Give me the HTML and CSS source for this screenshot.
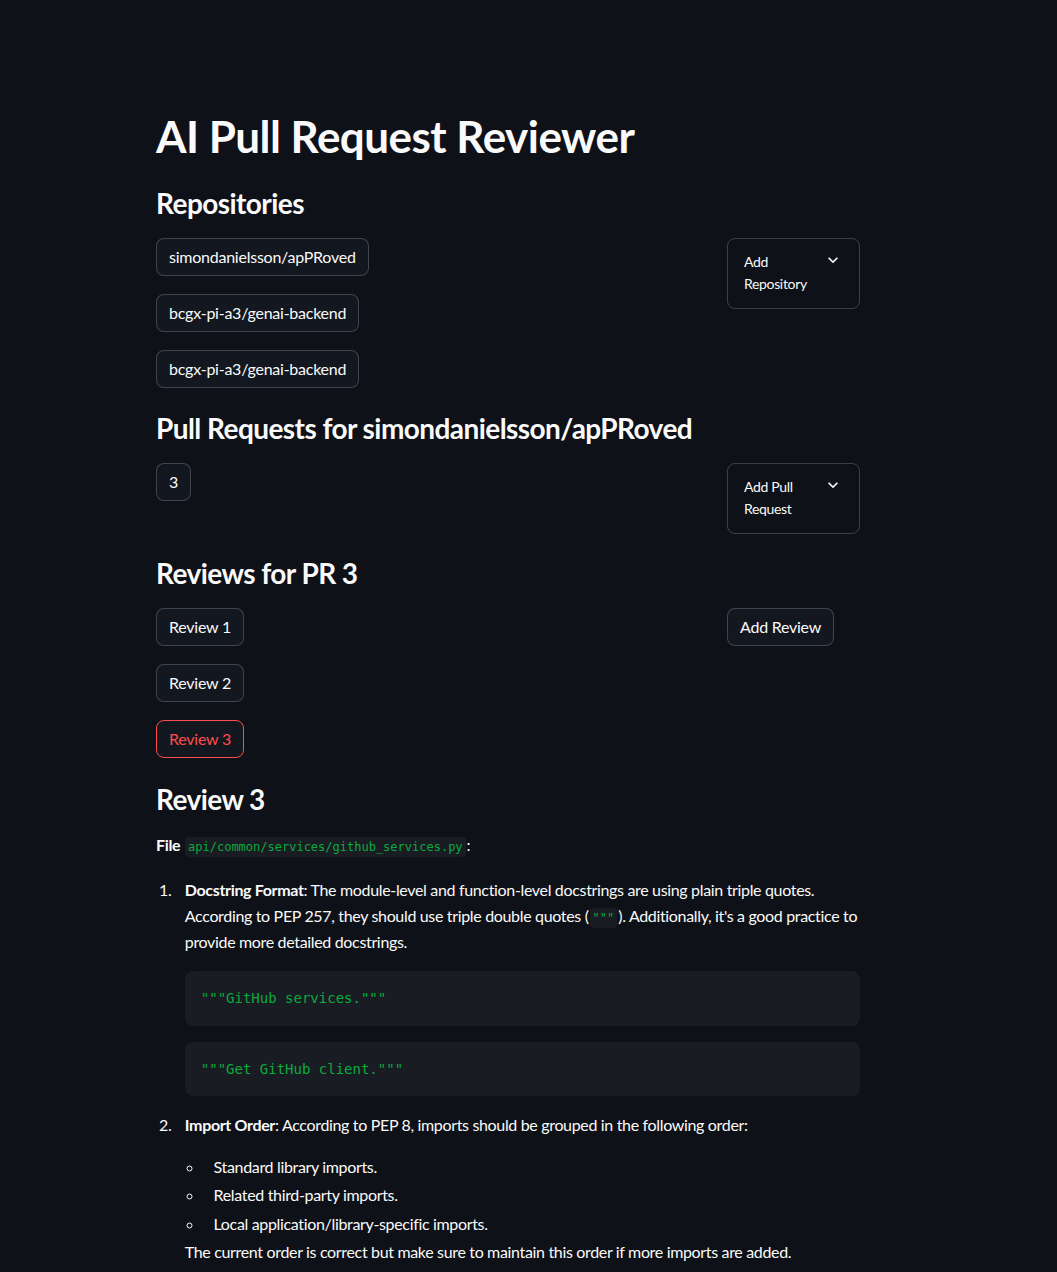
FILE: index.html
```html
<!DOCTYPE html>
<html lang="en">
<head>
<meta charset="utf-8">
<title>AI Pull Request Reviewer</title>
<link rel="stylesheet" href="styles.css">
</head>
<body>
<main class="main">
  <h1 class="title">AI Pull Request Reviewer</h1>

  <h3 class="heading">Repositories</h3>
  <div class="cols">
    <div class="stack">
      <button class="btn">simondanielsson/apPRoved</button>
      <button class="btn">bcgx-pi-a3/genai-backend</button>
      <button class="btn">bcgx-pi-a3/genai-backend</button>
    </div>
    <div class="side">
      <div class="expander">
        <span class="exp-label">Add Repository</span>
        <svg class="chev" viewBox="0 0 24 24" width="20" height="20"><path d="M16.59 8.59L12 13.17 7.41 8.59 6 10l6 6 6-6z" fill="#fafafa"/></svg>
      </div>
    </div>
  </div>

  <h3 class="heading">Pull Requests for simondanielsson/apPRoved</h3>
  <div class="cols">
    <div class="stack">
      <button class="btn">3</button>
    </div>
    <div class="side">
      <div class="expander">
        <span class="exp-label">Add Pull Request</span>
        <svg class="chev" viewBox="0 0 24 24" width="20" height="20"><path d="M16.59 8.59L12 13.17 7.41 8.59 6 10l6 6 6-6z" fill="#fafafa"/></svg>
      </div>
    </div>
  </div>

  <h3 class="heading heading-tight">Reviews for PR 3</h3>
  <div class="cols">
    <div class="stack">
      <button class="btn">Review 1</button>
      <button class="btn">Review 2</button>
      <button class="btn btn-active">Review 3</button>
    </div>
    <div class="side">
      <button class="btn">Add Review</button>
    </div>
  </div>

  <h3 class="heading heading-loose">Review 3</h3>
  <div class="md">
    <p class="file"><strong>File</strong> <code>api/common/services/github_services.py</code>:</p>
    <ol class="olist">
      <li class="item">
        <p><strong>Docstring Format</strong>: The module-level and function-level docstrings are using plain triple quotes. According to PEP 257, they should use triple double quotes (<code>"""</code>). Additionally, it's a good practice to provide more detailed docstrings.</p>
        <pre class="codeblock"><code>"""GitHub services."""</code></pre>
        <pre class="codeblock"><code>"""Get GitHub client."""</code></pre>
      </li>
      <li class="item">
        <p><strong>Import Order</strong>: According to PEP 8, imports should be grouped in the following order:</p>
        <ul class="ulist">
          <li>Standard library imports.</li>
          <li>Related third-party imports.</li>
          <li>Local application/library-specific imports.</li>
        </ul>
        <p>The current order is correct but make sure to maintain this order if more imports are added.</p>
      </li>
    </ol>
  </div>
</main>
</body>
</html>
```

FILE: styles.css
```css
html, body {
  margin: 0;
  padding: 0;
  background: #0e1117;
}

body {
  color: #fafafa;
  font-family: Lato, "Source Sans Pro", "Noto Sans", sans-serif;
  font-size: 16px;
  line-height: 1.6;
  letter-spacing: -0.021em;
}

.main {
  width: 704px;
  margin-left: 156px;
  padding-top: 110px;
  padding-bottom: 40px;
}

.title {
  margin: 0;
  font-size: 44px;
  font-weight: 700;
  line-height: 53px;
  letter-spacing: -0.012em;
}

.heading {
  margin: 23px 0 18px;
  font-size: 28px;
  font-weight: 700;
  line-height: 34px;
  letter-spacing: -0.02em;
}

.heading-tight {
  margin-top: 22px;
  margin-bottom: 18px;
}

.heading-loose {
  margin-top: 24px;
  margin-bottom: 16px;
}

.cols {
  display: grid;
  grid-template-columns: 1fr 133px;
  column-gap: 16px;
  align-items: start;
}

.stack {
  display: flex;
  flex-direction: column;
  align-items: flex-start;
  gap: 18px;
}

.side {
  display: flex;
  flex-direction: column;
  align-items: flex-start;
}

.btn {
  box-sizing: border-box;
  height: 38px;
  padding: 0 12px;
  display: inline-flex;
  align-items: center;
  background: rgb(19, 23, 32);
  color: #fafafa;
  border: 1px solid rgba(250, 250, 250, 0.2);
  border-radius: 8px;
  font-family: inherit;
  font-size: 16px;
  line-height: 1.6;
  letter-spacing: -0.015em;
  white-space: nowrap;
}

.btn-active {
  color: rgb(255, 75, 75);
  border-color: rgb(255, 75, 75);
}

.expander {
  box-sizing: border-box;
  width: 133px;
  display: flex;
  align-items: flex-start;
  gap: 8px;
  padding: 12px 16px;
  border: 1px solid rgba(250, 250, 250, 0.2);
  border-radius: 8px;
  font-size: 14px;
  line-height: 22.4px;
}

.exp-label {
  flex: 1;
}

.chev {
  flex: none;
  margin-top: -1px;
}

.md p {
  margin: 0;
}

.file {
  margin: 0;
}

code {
  font-family: "DejaVu Sans Mono", "Liberation Mono", monospace;
  font-size: 12px;
  letter-spacing: 0;
  color: rgb(9, 171, 59);
  background: rgb(26, 28, 36);
  padding: 3px 3px;
  margin: 0 1px;
  border-radius: 4px;
}

.olist {
  margin: 20px 0 0;
  padding: 0;
}

.item {
  margin: 0 0 16px 19.2px;
  padding-left: 9.6px;
}

.codeblock {
  margin: 17px 0 0;
  padding: 16px;
  background: rgb(26, 28, 36);
  border-radius: 8px;
}

.codeblock + .codeblock {
  margin-top: 16px;
}

.codeblock code {
  font-size: 14px;
  line-height: 22.4px;
  padding: 0;
  margin: 0;
  background: none;
  display: block;
}

.ulist {
  margin: 16px 0 0;
  padding: 0;
  list-style: circle;
}

.ulist li {
  margin: 3px 0 3px 19.2px;
  padding-left: 9.6px;
}
```
